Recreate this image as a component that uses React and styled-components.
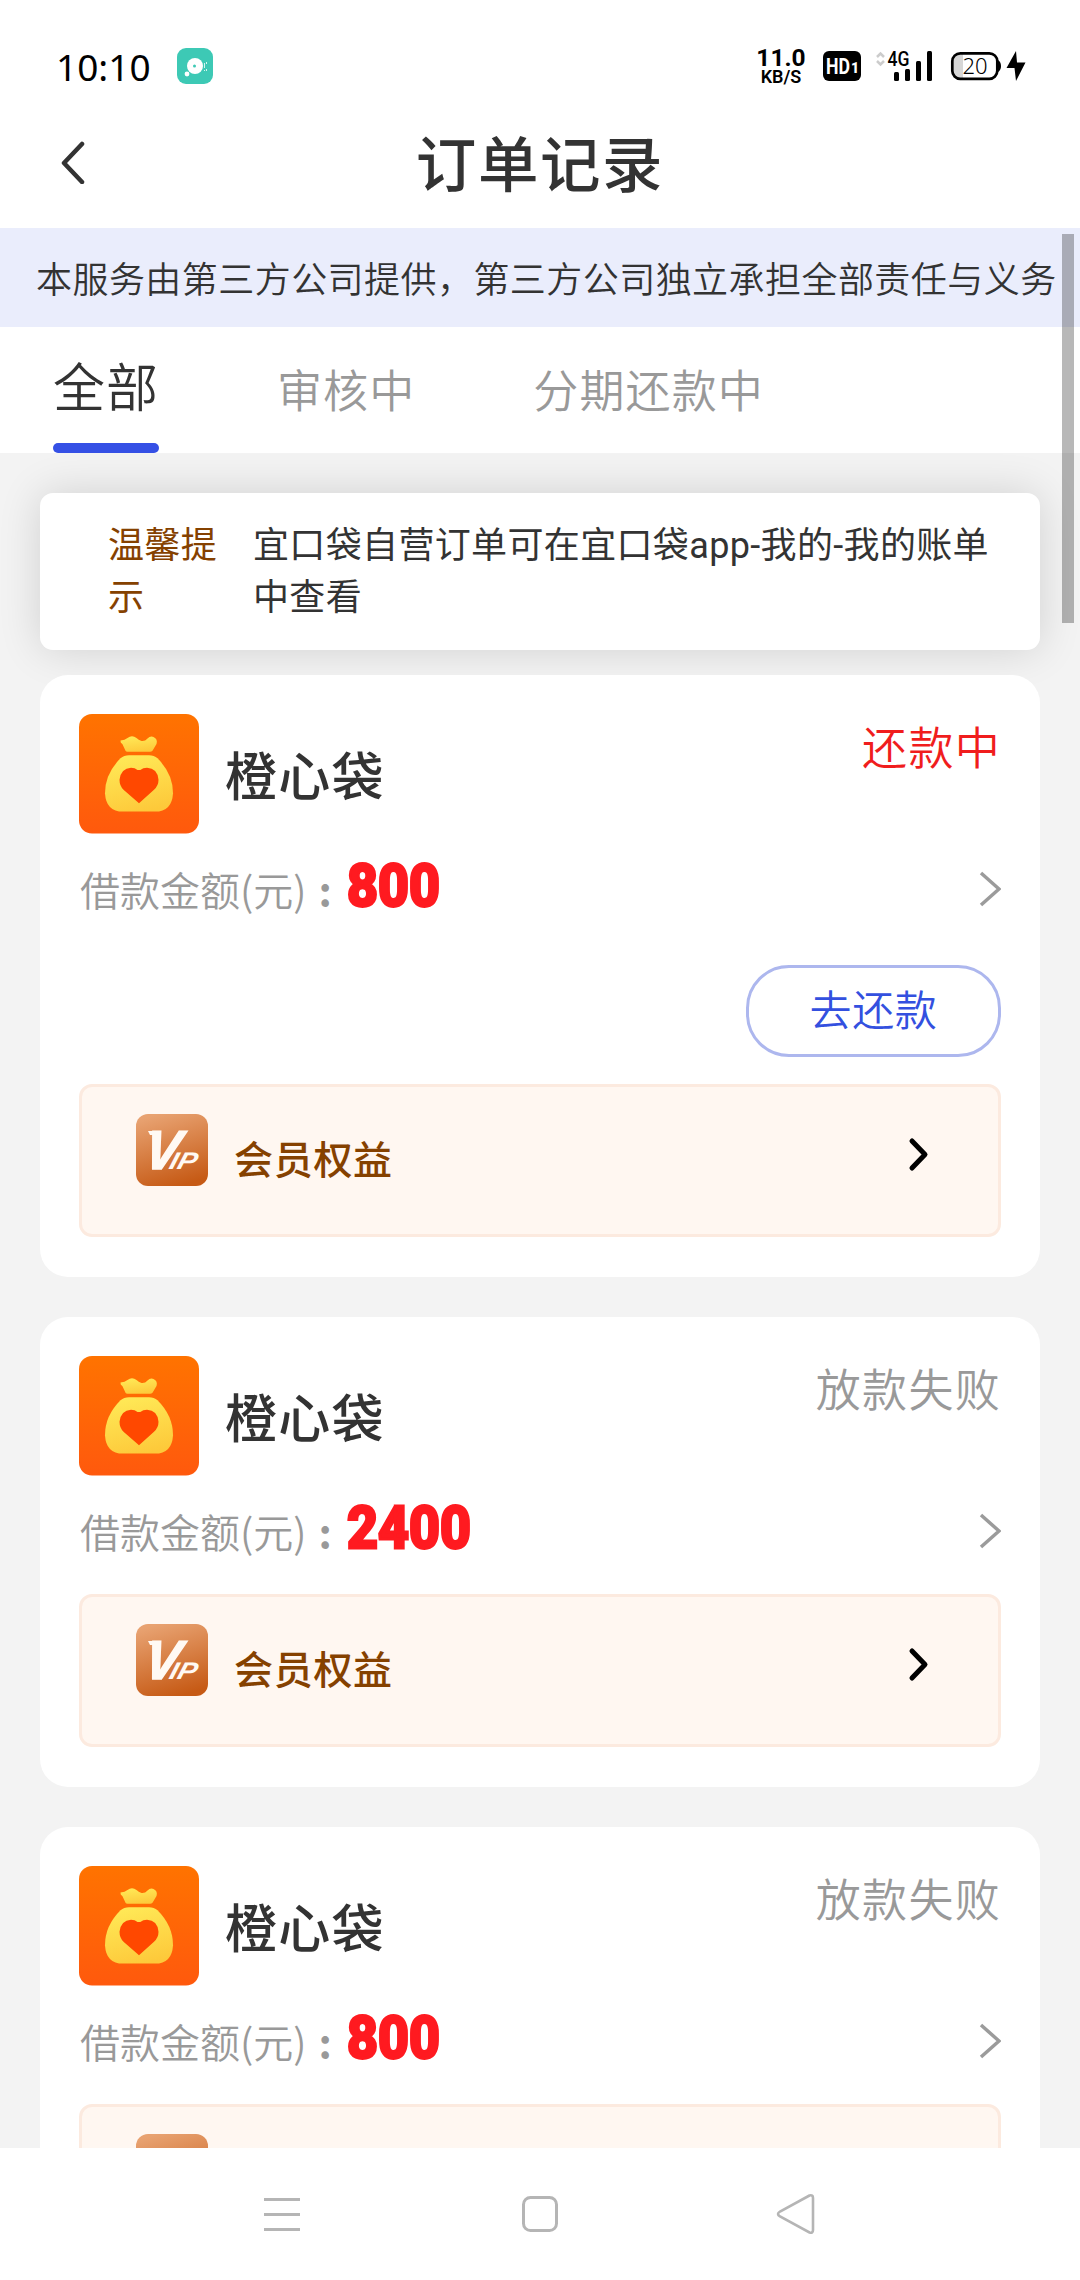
import styled, { createGlobalStyle } from "styled-components"

const GlobalStyle = createGlobalStyle`
    * {
        box-sizing: border-box;
    }

    body {
        margin: 0;
        background: #fff;
        color: #333;
        font-family: "Noto Sans", "Noto Sans CJK SC", sans-serif;
    }
`

const Screen = styled.div`
    display: flex;
    flex-direction: column;
    width: 1080px;
    height: 2280px;
    overflow: hidden;
    background: #fff;
    font-family: "Noto Sans CJK SC", sans-serif;
    font-weight: 350;
`

const StatusBar = styled.div`
    display: flex;
    align-items: center;
    height: 96px;
    flex-shrink: 0;
    padding: 36px 54px 0 56px;
    color: #000;

    .time {
        width: 121px;
        padding-top: 1px;
        font-family: "Noto Sans", sans-serif;
        font-size: 37px;
        font-weight: 380;
        line-height: 60px;
    }

    .speed {
        display: flex;
        flex-direction: column;
        align-items: center;
        width: 50px;
        margin-left: auto;
        font-family: Roboto, sans-serif;
        font-weight: 700;
    }

    .speed__value {
        font-size: 24.5px;
        line-height: 20px;
    }

    .speed__unit {
        font-size: 18px;
        font-weight: 600;
        line-height: 17px;
    }
`

const StatusIcons = styled.svg`
    margin-left: 14px;
    font-family: Roboto, sans-serif;
`

const TitleBar = styled.header`
    display: grid;
    grid-template-columns: 180px 1fr 180px;
    align-items: center;
    height: 132px;
    flex-shrink: 0;

    svg {
        margin-left: 59px;
    }

    h1 {
        margin: 0 0 2px;
        text-align: center;
        font-size: 60.5px;
        font-weight: 500;
        line-height: 90px;
        letter-spacing: 1.6px;
    }
`

const Content = styled.main`
    position: relative;
    display: flex;
    flex-direction: column;
    height: 1920px;
    overflow: hidden;
    background: #f3f3f3;
`

const ScrollThumb = styled.div`
    position: absolute;
    top: 6px;
    right: 6px;
    width: 12px;
    height: 389px;
    background: rgba(0, 0, 0, 0.28);
    z-index: 2;
`

const Notice = styled.div`
    height: 99px;
    flex-shrink: 0;
    padding-left: 36px;
    background: #eaedfc;
    font-size: 36px;
    line-height: 99px;
    letter-spacing: 0.45px;
    white-space: nowrap;
    z-index: 1;
`

const Tabs = styled.nav`
    display: flex;
    height: 126px;
    flex-shrink: 0;
    padding-left: 53px;
    gap: 118px;
    background: #fff;
    z-index: 1;
`

const Tab = styled.div`
    display: flex;
    flex-direction: column;
    justify-content: space-between;
    color: ${({ $active }) => ($active ? "#333" : "#999")};
    font-size: ${({ $active }) => ($active ? "52px" : "45px")};
    line-height: ${({ $active }) => ($active ? "116px" : "123px")};
    letter-spacing: ${({ $active }) => ($active ? "1px" : "1.1px")};
    white-space: nowrap;

    &::after {
        content: "";
        display: ${({ $active }) => ($active ? "block" : "none")};
        height: 10px;
        flex-shrink: 0;
        border-radius: 5px;
        background: #3550e5;
    }
`

const Tip = styled.section`
    display: flex;
    height: 157px;
    flex-shrink: 0;
    margin: 40px 40px 25px;
    padding: 27px 40px 0 68px;
    border-radius: 13px;
    background: #fff;
    box-shadow: 0 0 43px rgba(0, 0, 0, 0.14);
    font-family: Roboto, "Noto Sans CJK SC", sans-serif;
    font-size: 36px;
    font-weight: 370;
    line-height: 52px;
    letter-spacing: 0.35px;

    .tip__label {
        width: 112px;
        flex-shrink: 0;
        margin-right: 33px;
        color: #854100;
    }
`

const Card = styled.article`
    position: relative;
    display: flex;
    flex-direction: column;
    flex-shrink: 0;
    margin: 0 40px 40px;
    padding: 39px 39px 40px;
    border-radius: 28px;
    background: #fff;
`

const CardHead = styled.div`
    display: flex;
    height: 119.5px;

    .card__name {
        margin: 0 auto 0 26px;
        font-size: 52px;
        font-weight: 500;
        line-height: 120px;
        letter-spacing: 1.3px;
    }
`

const Status = styled.div`
    color: ${({ $repaying }) => ($repaying ? "#f01d1d" : "#999")};
    font-size: 45px;
    line-height: 63px;
    letter-spacing: 1.3px;
`

const AmountRow = styled.div`
    display: flex;
    align-items: center;
    height: 91.5px;
    padding-top: 19px;

    .amount__label {
        width: 268px;
        flex-shrink: 0;
        padding-left: 1px;
        color: #999;
        font-size: 40px;
        line-height: 60px;
        white-space: nowrap;
    }

    .amount__colon {
        margin-left: 12px;
        font-size: 41px;
        font-weight: 600;
    }

    .amount__value {
        margin-bottom: 5px;
        color: #ff1a20;
        font-family: Roboto, sans-serif;
        font-size: 60px;
        font-weight: 800;
        line-height: 60px;
        transform: scaleX(0.895);
        transform-origin: left center;
        -webkit-text-stroke: 3px #ff1a20;
    }

    svg {
        margin-left: auto;
    }
`

const RepayButton = styled.button`
    align-self: flex-end;
    width: 255px;
    height: 92px;
    margin-top: 40px;
    padding: 0;
    border: 3px solid #adb7ee;
    border-radius: 43px;
    background: #fff;
    color: #3350df;
    font: inherit;
    font-size: 42px;
    line-height: 76px;
    letter-spacing: 0.6px;

    span {
        display: block;
        height: 82px;
    }
`

const VipRow = styled.div`
    display: flex;
    align-items: flex-start;
    height: 153px;
    margin-top: 27px;
    padding: 27px 67px 0 54px;
    border: 3px solid #fceadf;
    border-radius: 13px;
    background: #fff7f1;

    .vip__text {
        margin: 3px auto 0 26px;
        color: #854100;
        font-size: 39px;
        font-weight: 500;
        line-height: 80px;
        letter-spacing: 0.7px;
    }

    .vip__arrow {
        margin-top: 22px;
    }
`

const NavBar = styled.footer`
    display: flex;
    justify-content: center;
    height: 132px;
    flex-shrink: 0;
    padding-top: 44px;
    gap: 216px;
    background: #fff;
`

const orders = [
    { id: 1, name: "橙心袋", status: "还款中", amount: 800, repaying: true },
    { id: 2, name: "橙心袋", status: "放款失败", amount: 2400 },
    { id: 3, name: "橙心袋", status: "放款失败", amount: 800 },
]

const MusicIcon = () => (
    <svg width="36" height="36" viewBox="0 0 36 36">
        <rect width="36" height="36" rx="9" fill="#3dc9b5" />
        <circle cx="18" cy="18" r="8" fill="#fff" />
        <circle cx="17.5" cy="18" r="1.5" fill="#3dc9b5" />
        <circle cx="10" cy="26" r="2.4" fill="#fff" />
        <path d="M27.5 15v5M27.5 22v1M29.5 14v2M29.5 21v2" stroke="#d4f4ef" strokeWidth="1" />
    </svg>
)

// HD badge, signal and battery, left to right
const SystemIcons = () => (
    <StatusIcons width="206" height="36" viewBox="820 48 206 36">
        <rect x="823" y="51" width="38" height="30" rx="6" />
        <text x="826" y="74" fill="#fff" fontSize="22" fontWeight="700" textLength="24" lengthAdjust="spacingAndGlyphs">HD</text>
        <text x="851" y="73" fill="#fff" fontSize="14" fontWeight="900">1</text>
        <path d="M877 57l3.5-3.5 3.5 3.5M877 61l3.5 3.5 3.5-3.5" fill="none" stroke="#ccc" strokeWidth="2.5" />
        <text x="887.5" y="66" fontSize="20" fontWeight="500" textLength="22" lengthAdjust="spacingAndGlyphs">4G</text>
        <rect x="894" y="72" width="5" height="9" rx="1.5" />
        <rect x="905" y="69" width="5" height="12" rx="1.5" />
        <rect x="916" y="61" width="5" height="20" rx="1.5" />
        <rect x="927" y="51" width="5" height="30" rx="1.5" />
        <path d="M963 54v24h-2a8 8 0 0 1-8-8v-8a8 8 0 0 1 8-8z" fill="#d6d6d6" />
        <rect x="952.3" y="53.3" width="45" height="25.5" rx="8" fill="none" stroke="#000" strokeWidth="2.7" />
        <path d="M998 60q3 2 3 6t-3 6z" />
        <text x="962.5" y="73.500" fontSize="22" fontFamily="Noto Sans, sans-serif" textLength="25">20</text>
        <path d="M1016 51l-9.500 17h8l1.500 13 9.500-18.500h-8.500z" strokeLinejoin="round" />
    </StatusIcons>
)

const BackIcon = () => (
    <svg width="28" height="44" viewBox="0 0 28 44">
        <path d="M23 4L5 23l18 19" fill="none" stroke="#333" strokeWidth="4.500" strokeLinecap="round" strokeLinejoin="round" />
    </svg>
)

const BagLogo = () => (
    <svg width="120" height="119.500" viewBox="0 0 120 120" preserveAspectRatio="none">
        <defs>
            <linearGradient id="bagBg" x1="0" y1="0" x2="0" y2="1">
                <stop offset="0" stopColor="#ff7300" />
                <stop offset="1" stopColor="#ff590d" />
            </linearGradient>
            <linearGradient id="bagFill" x1="0.3" y1="0" x2="0.6" y2="1">
                <stop offset="0" stopColor="#ffe957" />
                <stop offset="1" stopColor="#fdc93a" />
            </linearGradient>
        </defs>
        <rect width="120" height="120" rx="13" fill="url(#bagBg)" />
        <path
            d="M41.500 26.500q4.500 0 7-2.500 4.500-3.500 9 0 2 2 5 3 3.500.5 6-2.500 2.500-2.500 6-1.500 4.500 2 3 7l-4 7q-1 1-2.500 1H48.500q-1.500 0-2-1l-3-6.500q-2.500-2-2-4z"
            fill="url(#bagFill)"
        />
        <path d="M50 41.500h20q5 0 8.500 3Q94 60 94 79.500 93 98 76 98H44Q27 98 26 79.500 26 60 41.500 44.500q3.500-3 8.500-3z" fill="url(#bagFill)" />
        <path d="M60 89.500L44.500 76Q40.500 72 40.500 66 42 54.500 52 54q4 0 6.500 2.200h2.800Q64 54 68 54q10.500.5 11.500 12 0 6-4.500 10z" fill="#ff4800" />
    </svg>
)

const VipIcon = () => (
    <svg width="72" height="72" viewBox="0 0 72 72">
        <defs>
            <linearGradient id="vipBg" x1="0.3" y1="0" x2="0.6" y2="1">
                <stop offset="0" stopColor="#e8a271" />
                <stop offset="1" stopColor="#c65a15" />
            </linearGradient>
        </defs>
        <rect width="72" height="72" rx="12" fill="url(#vipBg)" />
        <g fill="#fff9f3" fontFamily="Liberation Sans, sans-serif" fontStyle="italic" fontWeight="700">
            <text
                transform="translate(6.500 55) skewX(-9)"
                fontSize="55"
                textLength="35"
                lengthAdjust="spacingAndGlyphs"
                stroke="#fff9f3"
                strokeWidth="1.500"
            >
                V
            </text>
            <text transform="translate(32 55) skewX(-16)" fontSize="24" textLength="27" lengthAdjust="spacingAndGlyphs">IP</text>
        </g>
        <path d="M12 17h9v4h-7z" fill="#fff9f3" />
    </svg>
)

const OrderCard = ({ order }) => (
    <Card>
        <CardHead>
            <BagLogo />
            <h2 className="card__name">{order.name}</h2>
            <Status $repaying={order.repaying}>{order.status}</Status>
        </CardHead>
        <AmountRow>
            <div className="amount__label">
                借款金额(元)<span className="amount__colon">:</span>
            </div>
            <div className="amount__value">{order.amount}</div>
            <svg width="22" height="36" viewBox="0 0 22 36">
                <path d="M2 2l18 16L2 34" fill="none" stroke="#9b9b9b" strokeWidth="3.500" />
            </svg>
        </AmountRow>
        {order.repaying && (
            <RepayButton>
                <span>去还款</span>
            </RepayButton>
        )}
        <VipRow>
            <VipIcon />
            <div className="vip__text">会员权益</div>
            <svg className="vip__arrow" width="24" height="36" viewBox="0 0 24 36">
                <path d="M5 5l13 13.500L5 32" fill="none" stroke="#000" strokeWidth="5" strokeLinecap="round" strokeLinejoin="round" />
            </svg>
        </VipRow>
    </Card>
)

const App = () => {
    return (
        <Screen lang="zh-CN">
            <GlobalStyle />
            <StatusBar>
                <div className="time">10:10</div>
                <MusicIcon />
                <div className="speed">
                    <span className="speed__value">11.0</span>
                    <span className="speed__unit">KB/S</span>
                </div>
                <SystemIcons />
            </StatusBar>
            <TitleBar>
                <BackIcon />
                <h1>订单记录</h1>
            </TitleBar>
            <Content>
                <ScrollThumb />
                <Notice>{"本服务由第三方公司提供\uff0c第三方公司独立承担全部责任与义务"}</Notice>
                <Tabs>
                    <Tab $active>全部</Tab>
                    <Tab>审核中</Tab>
                    <Tab>分期还款中</Tab>
                </Tabs>
                <Tip>
                    <div className="tip__label">温馨提示</div>
                    <div>宜口袋自营订单可在宜口袋app-我的-我的账单中查看</div>
                </Tip>
                {orders.map((order) => (
                    <OrderCard key={order.id} order={order} />
                ))}
            </Content>
            <NavBar>
                <svg width="40" height="44" viewBox="0 0 40 44">
                    <path d="M0 7.500h36M0 22.500h36M0 37.500h36" stroke="#b5b5b5" strokeWidth="3" />
                </svg>
                <svg width="40" height="44" viewBox="0 0 40 44">
                    <rect x="3.500" y="5.500" width="33" height="33" rx="7" fill="none" stroke="#b5b5b5" strokeWidth="3" />
                </svg>
                <svg width="40" height="44" viewBox="0 0 40 44">
                    <path d="M33.500 3.500L4 19.500q-4 2.500 0 5L33.500 40.500q3.500 1 3.500-2.500V6q0-3.500-3.500-2.500z" fill="none" stroke="#b5b5b5" strokeWidth="2.600" />
                </svg>
            </NavBar>
        </Screen>
    )
}

export default App
